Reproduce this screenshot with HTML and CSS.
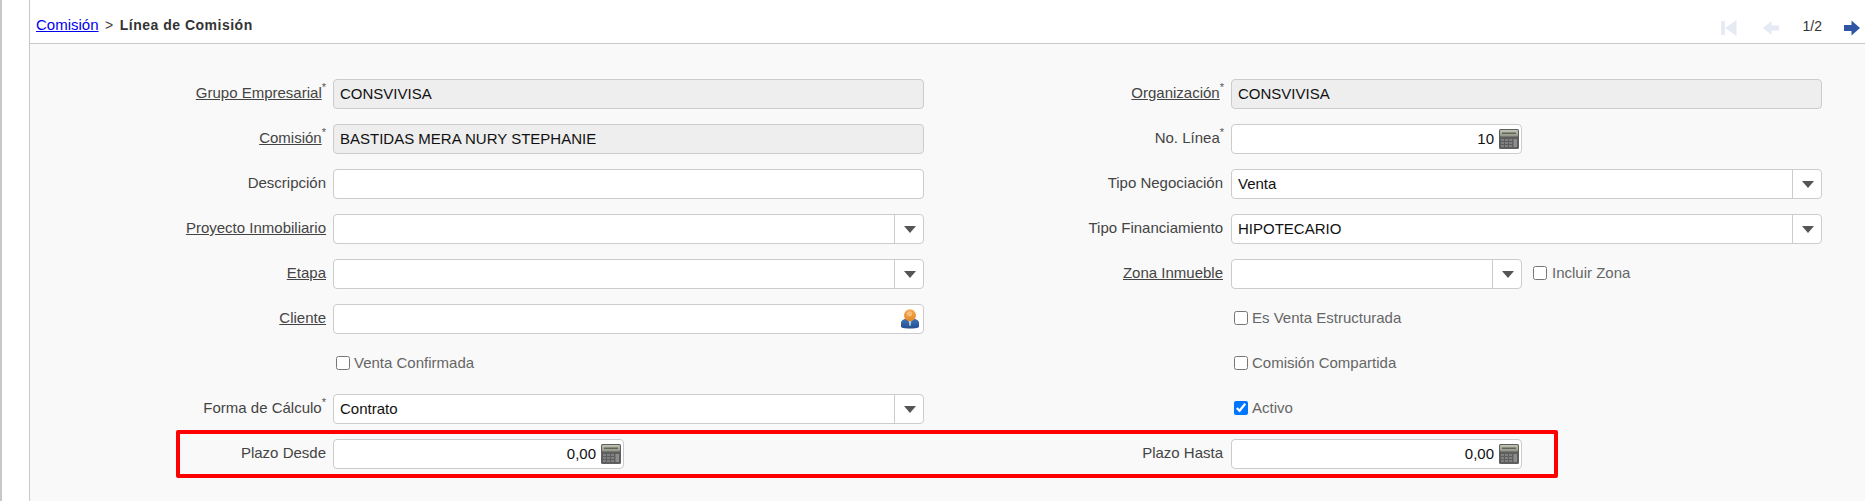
FILE: index.html
```html
<!DOCTYPE html>
<html lang="es">
<head>
<meta charset="utf-8">
<title>Línea de Comisión</title>
<link rel="stylesheet" href="styles.css">
</head>
<body>
<svg class="defs" width="0" height="0" aria-hidden="true">
  <defs>
    <linearGradient id="scr" x1="0" y1="0" x2="0" y2="1"><stop offset="0" stop-color="#c2c5b4"/><stop offset="1" stop-color="#8f9384"/></linearGradient>
    <linearGradient id="head" x1="0" y1="0" x2="0" y2="1"><stop offset="0" stop-color="#f3ab55"/><stop offset="1" stop-color="#e58a25"/></linearGradient>
    <linearGradient id="body" x1="0" y1="0" x2="0" y2="1"><stop offset="0" stop-color="#3f74b5"/><stop offset="1" stop-color="#234f8f"/></linearGradient>
    <symbol id="calc" viewBox="0 0 20 20">
      <rect x="0" y="0" width="20" height="20" rx="1.500" fill="#5e5e5e"/>
      <rect x="1" y="1" width="18" height="6.500" rx="1" fill="url(#scr)"/>
      <rect x="3" y="3.500" width="14" height="1.500" fill="#62665a"/>
      <g fill="#808080">
        <rect x="2" y="10" width="3" height="2"/><rect x="6" y="10" width="3" height="2"/><rect x="10" y="10" width="3" height="2"/>
        <rect x="2" y="13" width="3" height="2"/><rect x="6" y="13" width="3" height="2"/><rect x="10" y="13" width="3" height="2"/>
        <rect x="2" y="16" width="3" height="2"/><rect x="6" y="16" width="3" height="2"/><rect x="10" y="16" width="3" height="2"/>
      </g>
      <rect x="14.500" y="10" width="3.500" height="8" fill="#8c8c8c"/>
    </symbol>
  </defs>
</svg>
<div class="app">
  <div class="rail"></div>
  <main class="main">
    <header class="topbar">
      <div class="crumbs"><a href="#" class="crumb-link">Comisión</a><span class="crumb-sep">&gt;</span><b class="crumb-current">Línea de Comisión</b></div>
      <nav class="pager">
        <svg class="pg-icon" viewBox="0 0 16 16"><path d="M0 1h4v14H0zM15.500 0v16L4 8z" fill="#e6eaf4"/></svg>
        <svg class="pg-icon pg-prev" viewBox="0 0 16 16"><path d="M8.500 1v4.500H16v5H8.500V15L0 8z" fill="#e6eaf4"/></svg>
        <span class="pg-count">1/2</span>
        <svg class="pg-icon pg-next" viewBox="0 0 16 16"><path d="M7.500 .5v4.500H0v6h7.500v4.500L16 8z" fill="#2f55a4"/></svg>
      </nav>
    </header>
    <form class="form">
      <label class="lbl"><u>Grupo Empresarial</u><sup>*</sup></label>
      <div class="field ro">CONSVIVISA</div>
      <label class="lbl"><u>Organización</u><sup>*</sup></label>
      <div class="field ro">CONSVIVISA</div>

      <label class="lbl"><u>Comisión</u><sup>*</sup></label>
      <div class="field ro">BASTIDAS MERA NURY STEPHANIE</div>
      <label class="lbl">No. Línea<sup>*</sup></label>
      <div class="field short num"><span class="val">10</span><svg class="calc"><use href="#calc"/></svg></div>

      <label class="lbl first">Descripción</label>
      <div class="field"></div>
      <label class="lbl">Tipo Negociación</label>
      <div class="field sel"><span class="val">Venta</span><span class="arrow"></span></div>

      <label class="lbl first"><u>Proyecto Inmobiliario</u></label>
      <div class="field sel"><span class="val"></span><span class="arrow"></span></div>
      <label class="lbl">Tipo Financiamiento</label>
      <div class="field sel"><span class="val">HIPOTECARIO</span><span class="arrow"></span></div>

      <label class="lbl first"><u>Etapa</u></label>
      <div class="field sel"><span class="val"></span><span class="arrow"></span></div>
      <label class="lbl"><u>Zona Inmueble</u></label>
      <div class="inline">
        <div class="field short sel"><span class="val"></span><span class="arrow"></span></div>
        <label class="chk"><input type="checkbox">Incluir Zona</label>
      </div>

      <label class="lbl first"><u>Cliente</u></label>
      <div class="field person">
        <span class="val"></span>
        <svg class="person-icon" viewBox="0 0 18 20">
          <path d="M0 18v-4c0-2.500 3-4 5.500-4.500h7c2.500.5 5.500 2 5.500 4.500v4c-2 2-16 2-18 0z" fill="url(#body)"/>
          <path d="M7.500 11h3l-1 6h-1z" fill="#b8cfe6"/>
          <circle cx="9" cy="6.200" r="6" fill="url(#head)"/>
          <circle cx="8.500" cy="4.800" r="2.600" fill="#f6bd78"/>
        </svg>
      </div>
      <span></span>
      <label class="chk"><input type="checkbox">Es Venta Estructurada</label>

      <span></span>
      <label class="chk"><input type="checkbox">Venta Confirmada</label>
      <span></span>
      <label class="chk"><input type="checkbox">Comisión Compartida</label>

      <label class="lbl">Forma de Cálculo<sup>*</sup></label>
      <div class="field sel"><span class="val">Contrato</span><span class="arrow"></span></div>
      <span></span>
      <label class="chk"><input type="checkbox" checked>Activo</label>

      <label class="lbl first">Plazo Desde</label>
      <div class="field short num"><span class="val">0,00</span><svg class="calc"><use href="#calc"/></svg></div>
      <label class="lbl">Plazo Hasta</label>
      <div class="field short num"><span class="val">0,00</span><svg class="calc"><use href="#calc"/></svg></div>
    </form>
    <div class="highlight"></div>
  </main>
</div>
</body>
</html>
```
FILE: styles.css
```css
* { box-sizing: border-box; }
html, body { margin: 0; height: 100%; overflow: hidden; }
body { background: #fff; font-family: "Liberation Sans", Arial, sans-serif; font-size: 15px; color: #000; }
.defs { position: absolute; }
.app { display: flex; height: 501px; }
.rail { width: 30px; flex: none; border-left: 2px solid #c8c8c8; border-right: 1px solid #c8c8c8; background: #fff; }
.main { flex: 1; background: #f9f9f9; position: relative; }
.topbar { height: 44px; background: #fff; border-bottom: 1px solid #c8c8c8; display: flex; justify-content: space-between; align-items: center; padding: 0 0 0 6px; }
.crumbs { display: flex; align-items: center; gap: 6.500px; margin-top: 6px; }
.crumb-link { color: #00e; }
.crumb-sep { color: #444; font-size: 14px; }
.crumb-current { color: #333; font-size: 14px; letter-spacing: .5px; }
.pager { display: flex; align-items: center; margin-top: 12px; }
.pg-icon { width: 16px; height: 16px; display: block; }
.pg-prev { margin-left: 26px; }
.pg-count { margin-left: 24px; font-size: 14px; color: #333; margin-top: -3px; }
.pg-next { margin-left: 22px; margin-right: 5px; }
.form { display: grid; grid-template-columns: 303px 591px 307px 591px; grid-auto-rows: 30px; row-gap: 15px; padding-top: 35px; align-items: center; }
.lbl { display: block; text-align: right; padding: 0 8px 2px 0; color: #444; line-height: 28px; white-space: nowrap; }
.lbl.first { padding-right: 7px; }
.lbl sup { font-size: 11px; line-height: 0; vertical-align: 7px; margin-right: -1px; color: #555; }
.field { height: 30px; background: #fff; border: 1px solid #ccc; border-radius: 4px; line-height: 28px; padding-left: 6px; display: flex; align-items: center; color: #111; }
.field.ro { background: #eee; }
.field.short { width: 291px; }
.val { flex: 1; }
.num .val { text-align: right; padding-right: 5px; }
.calc { width: 20px; height: 20px; flex: none; margin-right: 2px; }
.sel { padding-right: 0; }
.arrow { width: 29px; height: 28px; flex: none; border-left: 1px solid #ccc; position: relative; }
.arrow::after { content: ""; position: absolute; left: 9px; top: 11px; border: 6px solid transparent; border-top: 7px solid #555; border-bottom: 0; }
.person { padding-right: 4px; }
.person-icon { width: 18px; height: 20px; flex: none; }
.inline { display: flex; align-items: center; gap: 11px; }
.chk { display: flex; align-items: center; color: #666; line-height: 28px; padding: 0 0 2px 3px; white-space: nowrap; }
.chk input { margin: 0 4px 0 0; width: 14px; height: 14px; }
.inline .chk { padding-left: 0; }
.inline .chk input { margin-right: 5px; }
.highlight { position: absolute; left: 146px; top: 430px; width: 1382px; height: 48px; border: 4px solid #f00; border-radius: 2px; pointer-events: none; }
```
